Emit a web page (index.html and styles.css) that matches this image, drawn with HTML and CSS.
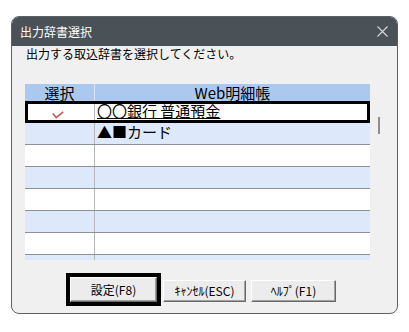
FILE: index.html
```html
<!DOCTYPE html>
<html lang="ja">
<head>
<meta charset="utf-8">
<title>出力辞書選択</title>
<link rel="stylesheet" href="styles.css">
</head>
<body>
<div class="dialog">
  <div class="titlebar">
    <span class="title">出力辞書選択</span>
    <svg class="close" width="11" height="11" viewBox="0 0 11 11"><path d="M0.5 0.5 L10.5 10.5 M10.5 0.5 L0.5 10.5" stroke="#d6d8da" stroke-width="1.1" fill="none"/></svg>
  </div>
  <div class="content">
    <p class="prompt">出力する取込辞書を選択してください。</p>
    <div class="gridwrap">
      <div class="grid">
        <div class="row head"><div class="c1">選択</div><div class="c2 center">Web明細帳</div></div>
        <div class="rows">
          <div class="row sel"><div class="c1"><svg class="check" width="12" height="8" viewBox="0 0 12 8"><path d="M0.8 2.6 L4.2 6.6 L11.2 0.8" stroke="#c4584e" stroke-width="1.6" fill="none"/></svg></div><div class="c2"><span class="ul">〇〇銀行 普通預金</span></div></div>
          <div class="row alt"><div class="c1"></div><div class="c2">▲■カード</div></div>
          <div class="row"><div class="c1"></div><div class="c2"></div></div>
          <div class="row alt"><div class="c1"></div><div class="c2"></div></div>
          <div class="row"><div class="c1"></div><div class="c2"></div></div>
          <div class="row alt"><div class="c1"></div><div class="c2"></div></div>
          <div class="row"><div class="c1"></div><div class="c2"></div></div>
          <div class="row alt"><div class="c1"></div><div class="c2"></div></div>
        </div>
      </div>
      <div class="vscroll"><div class="thumb"></div></div>
    </div>
    <div class="buttons">
      <div class="defbtn"><button class="btn face-def">設定(F8)</button></div>
      <button class="btn face-cancel">ｷｬﾝｾﾙ(ESC)</button>
      <button class="btn face-help">ﾍﾙﾌﾟ(F1)</button>
    </div>
  </div>
</div>
</body>
</html>
```
FILE: styles.css
```css
* { box-sizing: border-box; }
html, body { margin: 0; padding: 0; background: #ffffff; }
body { font-family: "Noto Sans CJK JP", "Noto Sans", sans-serif; color: #000; }

.dialog {
  margin: 16px 0 0 11px;
  width: 387px;
  height: 298px;
  border: 1px solid #5c6166;
  border-radius: 8px;
  overflow: hidden;
  background: #f0f0f0;
  display: flex;
  flex-direction: column;
}

.titlebar {
  height: 29px;
  background: #4b5257;
  display: flex;
  align-items: center;
  justify-content: space-between;
  padding: 0 9px 0 8px;
}
.title { color: #ffffff; font-size: 12px; line-height: 14px; }
.close { display: block; }

.content { display: flex; flex-direction: column; }

.prompt {
  margin: 0;
  padding: 1px 0 0 14px;
  font-size: 12px;
  line-height: 14px;
  height: 15px;
}

.gridwrap {
  margin: 23px 0 0 13px;
  height: 176px;
  display: flex;
}
.grid {
  width: 345px;
  height: 176px;
  display: flex;
  flex-direction: column;
}
.rows {
  height: 159px;
  overflow: hidden;
  background: #ffffff;
}
.row {
  display: flex;
  flex: none;
  height: 22px;
  border-bottom: 1px solid #8c9196;
  font-size: 15px;
  line-height: 17px;
  background: #ffffff;
}
.row.alt { background: #dde8fb; }
.row.head {
  height: 17px;
  border-bottom: none;
  background: #abc9ef;
  line-height: 17px;
  font-size: 15px;
}
.row.sel {
  outline: 3px solid #000;
  outline-offset: -3px;
  border-bottom: none;
}
.c1 {
  width: 70px;
  flex: none;
  border-right: 1px solid #b5b8bb;
  display: flex;
  justify-content: center;
}
.head .c1 { border-right-color: #d7e4f5; }
.c2 { flex: 1; padding-left: 2px; white-space: nowrap; }
.sel .c2 { padding-top: 2px; line-height: 15px; }
.c2.center { text-align: center; padding-left: 0; }
.ul { text-decoration: underline; text-underline-offset: 1px; }
.check { margin-top: 10px; margin-left: -3px; display: block; }

.vscroll { width: 17px; flex: none; }
.thumb {
  margin: 33px 0 0 8px;
  width: 2px;
  height: 17px;
  background: #8e8e8e;
}

.buttons {
  display: flex;
  align-items: flex-start;
  margin-top: 13px;
  padding-left: 54px;
}
.defbtn { border: 4px solid #000; }
.btn {
  font-family: "Noto Sans CJK JP", "Noto Sans", sans-serif;
  font-size: 12px;
  line-height: 14px;
  color: #000;
  background: #ececec;
  border: 1px solid;
  border-color: #ffffff #6a6a6a #6a6a6a #ffffff;
  box-shadow: inset -1px -1px 0 #a0a0a0;
  padding: 0;
  margin: 0;
  display: block;
}
.face-def { width: 87px; height: 25px; }
.face-cancel { width: 83px; height: 22px; margin: 7px 0 0 2px; }
.face-help { width: 85px; height: 22px; margin: 7px 0 0 5px; }
```
